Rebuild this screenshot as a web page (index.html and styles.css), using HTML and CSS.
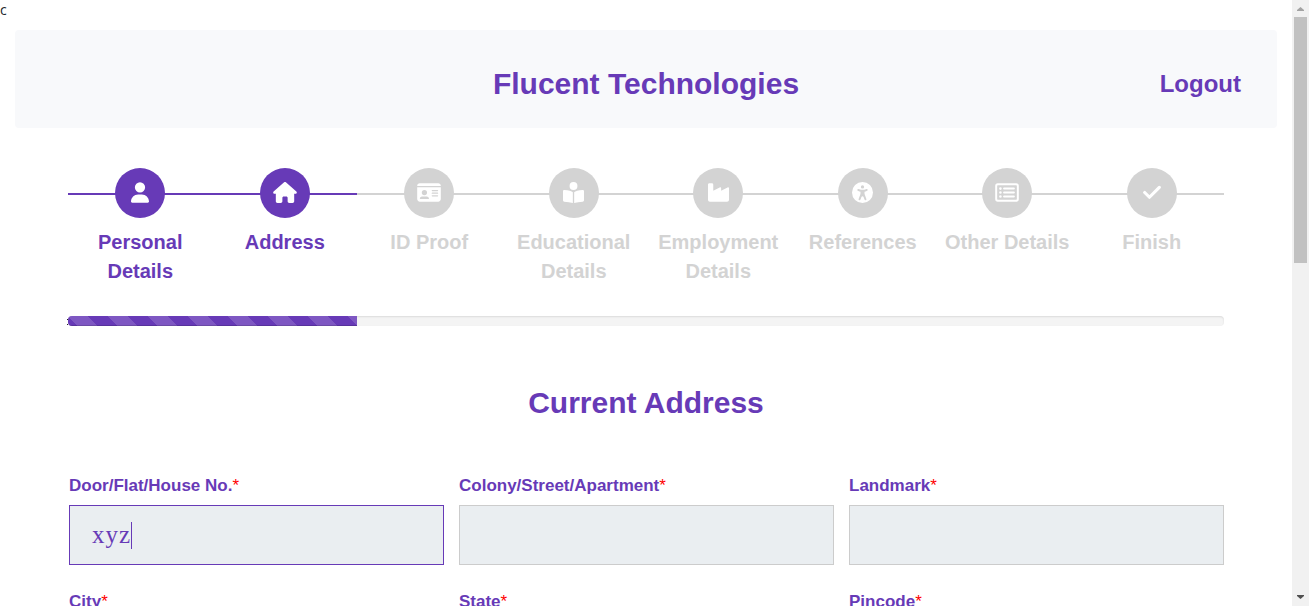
FILE: index.html
```html
<!DOCTYPE html>
<html lang="en">
<head>
<meta charset="utf-8">
<title>Flucent Technologies</title>
<link rel="stylesheet" href="styles.css">
</head>
<body>
<div class="viewport">
<main class="page">
<div class="stray">c</div>
<header class="header"><span></span><h1>Flucent Technologies</h1><a class="logout">Logout</a></header>
<div class="content">
<ol class="steps">
<li class="step active"><div class="circle"><svg width="18" height="21" viewBox="0 0 448 512"><path d="M224 256A128 128 0 1 0 224 0a128 128 0 1 0 0 256zm-46 48C80 304 0 384 0 482c0 16 14 30 30 30h388c16 0 30-14 30-30 0-98-80-178-178-178z"/></svg></div>Personal Details</li>
<li class="step active"><div class="circle"><svg width="24" height="21" viewBox="0 0 576 512"><path d="M575.800 255.500c0 18-15 32.100-32 32.100h-32l.7 160.200c0 2.700-.2 5.400-.5 8.100V472c0 22.100-17.900 40-40 40H392c-22.100 0-40-17.900-40-40V384c0-17.700-14.300-32-32-32H256c-17.700 0-32 14.300-32 32v88c0 22.100-17.900 40-40 40H104c-22.100 0-40-17.900-40-40V287.600H32c-18 0-32-14-32-32.100 0-9 3-17 10-24L266.400 8c7-7 15-8 22-8s15 2 21 7L564.800 231.500c8 7 12 15 11 24z"/></svg></div>Address</li>
<li class="step"><div class="circle"><svg width="24" height="21" viewBox="0 0 576 512"><path fill-rule="evenodd" d="M0 96l576 0c0-35.300-28.700-64-64-64H64C28.700 32 0 60.700 0 96zm0 32v288c0 35.300 28.700 64 64 64h448c35.300 0 64-28.700 64-64V128zM64 405c0-29 24-53 53-53h118c29 0 53 24 53 53 0 6-5 11-11 11H75c-6 0-11-5-11-11zM176 192a64 64 0 1 1 0 128 64 64 0 1 1 0-128zm176 16c0-9 7-16 16-16h128a16 16 0 0 1 0 32H368c-9 0-16-7-16-16zm0 64c0-9 7-16 16-16h128a16 16 0 0 1 0 32H368c-9 0-16-7-16-16zm0 64c0-9 7-16 16-16h128a16 16 0 0 1 0 32H368c-9 0-16-7-16-16z"/></svg></div>ID Proof</li>
<li class="step"><div class="circle"><svg width="21" height="21" viewBox="0 0 512 512"><path d="M352 96a96 96 0 1 0-192 0 96 96 0 1 0 192 0zM240 248c-29-23-104-54-208-56-18 0-32 13-32 31v224c0 18 15 31 31 32 77 4 146 17 209 33zm32 264c62-17 132-29 209-33 16-1 31-14 31-32V223c0-18-14-31-32-31-105 2-179 33-208 56z"/></svg></div>Educational Details</li>
<li class="step"><div class="circle"><svg width="21" height="21" viewBox="0 0 512 512"><path d="M32 32C14.300 32 0 46.300 0 64v368c0 26.500 21.500 48 48 48h416c26.500 0 48-21.500 48-48V152.200c0-18-19-30-35-21L320 215.400v-63.200c0-18-19-30-35-21L128 215.400V64c0-17.700-14.300-32-32-32z"/></svg></div>Employment Details</li>
<li class="step"><div class="circle"><svg width="21" height="21" viewBox="0 0 512 512"><path fill-rule="evenodd" d="M0 256a256 256 0 1 1 512 0 256 256 0 1 1-512 0zm161-86c-12-5-26 0-31 12s0 26 12 32l12 5c17 7 35 13 53 17v47c0 5-1 10-3 15l-42 114c-5 12 2 26 14 31s26-2 31-14l23-63c4-11 14-18 26-18s22 7 26 18l23 63c5 12 18 19 31 14s19-18 14-31l-42-114c-2-5-3-10-3-15v-47c18-4 36-10 53-17l12-5c12-6 17-20 12-32s-20-17-32-12l-11 5c-51 22-110 22-161 0zm95-10a40 40 0 1 0 0-80 40 40 0 1 0 0 80z"/></svg></div>References</li>
<li class="step"><div class="circle"><svg width="24" height="21" viewBox="0 0 576 512"><path fill-rule="evenodd" d="M64 32h448a64 64 0 0 1 64 64v320a64 64 0 0 1-64 64H64a64 64 0 0 1-64-64V96a64 64 0 0 1 64-64zm0 48a16 16 0 0 0-16 16v320a16 16 0 0 0 16 16h448a16 16 0 0 0 16-16V96a16 16 0 0 0-16-16z"/><path d="M96 160a32 32 0 1 1 64 0 32 32 0 1 1-64 0zm0 96a32 32 0 1 1 64 0 32 32 0 1 1-64 0zm0 96a32 32 0 1 1 64 0 32 32 0 1 1-64 0zM216 136h240a24 24 0 0 1 0 48H216a24 24 0 0 1 0-48zm0 96h240a24 24 0 0 1 0 48H216a24 24 0 0 1 0-48zm0 96h240a24 24 0 0 1 0 48H216a24 24 0 0 1 0-48z"/></svg></div>Other Details</li>
<li class="step"><div class="circle"><svg width="18" height="21" viewBox="0 0 448 512"><path d="M42 256l118 118L406 128" fill="none" stroke="#fff" stroke-width="78" stroke-linecap="round" stroke-linejoin="round"/></svg></div>Finish</li>
</ol>
<div class="track"><div class="progress"><div class="bar"></div></div></div>
<h2>Current Address</h2>
<form class="fields">
<div class="field"><label>Door/Flat/House No.<b>*</b></label><div class="input focused">xyz<span class="caret"></span></div></div>
<div class="field"><label>Colony/Street/Apartment<b>*</b></label><div class="input"></div></div>
<div class="field"><label>Landmark<b>*</b></label><div class="input"></div></div>
<div class="field"><label>City<b>*</b></label><div class="input"></div></div>
<div class="field"><label>State<b>*</b></label><div class="input"></div></div>
<div class="field"><label>Pincode<b>*</b></label><div class="input"></div></div>
</form>
</div>
</main>
<aside class="scrollbar"><svg width="17" height="17"><path fill="#a3a3a3" d="M5 11h7v-1L8.500 7 5 10z"/></svg><div class="thumb"></div><svg width="17" height="17"><path fill="#505050" d="M5 6h7v1L8.500 10 5 7z"/></svg></aside>
</div>
</body>
</html>
```
FILE: styles.css
```css
* { box-sizing: border-box; }
body { margin: 0; overflow: hidden; background: #fff; color: #673ab7; font-family: "Liberation Sans", Arial, sans-serif; }
.viewport { display: flex; height: 606px; overflow: hidden; }
.page { flex: 1; height: 606px; overflow: hidden; }
.stray { height: 30px; color: #212529; font: 14px/20px "Open Sans", sans-serif; }
.header { display: grid; grid-template-columns: 1fr auto 1fr; align-items: center; height: 98px; margin: 0 15px; padding: 10px 36px 0; border-radius: 4px; background: #f8f9fb; }
h1, h2 { margin: 0; font-size: 30px; line-height: 36px; font-weight: bold; }
h2 { margin-top: 59px; text-align: center; }
.logout { justify-self: end; font-size: 24px; font-weight: bold; }
.content { margin: 40px 68px 0; }
.steps { display: grid; grid-template-columns: repeat(8, 1fr); height: 148px; margin: 0; padding: 0; list-style: none; background: linear-gradient(#d3d3d3, #d3d3d3) 0 25px / 100% 2px no-repeat; }
.step { color: #d3d3d3; font-size: 20px; font-weight: bold; line-height: 29px; text-align: center; }
.active { color: #673ab7; background: linear-gradient(#673ab7, #673ab7) 0 25px / 100% 2px no-repeat; }
.circle { display: flex; align-items: center; justify-content: center; width: 50px; height: 50px; margin: 0 auto 10px; border-radius: 50%; background: currentColor; }
.circle svg { margin-bottom: 1px; fill: #fff; }
.track { position: relative; }
.track::before { content: ""; position: absolute; left: -1px; top: 3px; width: 1px; height: 4px; border: solid #222; border-width: 1px 0; }
.progress { height: 10px; overflow: hidden; border-radius: 4px; background: #f4f4f4; box-shadow: inset 0 1px 2px rgba(0, 0, 0, .1); }
.bar { width: 25%; height: 10px; background: linear-gradient(45deg, rgba(255, 255, 255, .15) 25%, transparent 25%, transparent 50%, rgba(255, 255, 255, .15) 50%, rgba(255, 255, 255, .15) 75%, transparent 75%) 0 0 / 40px 40px #673ab7; box-shadow: inset 0 -1px 0 rgba(0, 0, 0, .15); }
.fields { display: grid; grid-template-columns: repeat(3, 375px); gap: 26px 15px; margin: 54px 0 0 1px; }
label { display: block; height: 30px; padding-top: 1px; font-size: 17px; font-weight: bold; line-height: 20px; }
label b { color: red; font-weight: normal; }
.input { display: flex; align-items: center; height: 60px; padding-left: 22px; border: 1px solid #ccc; background: #eaeef1; font: 25px "Liberation Serif", serif; letter-spacing: 1px; }
.focused { border-color: #673ab7; }
.caret { width: 1px; height: 27px; background: #673ab7; }
.scrollbar { display: flex; flex-direction: column; justify-content: space-between; width: 17px; background: #f1f1f1; }
.thumb { width: 13px; height: 246px; margin: 0 2px auto; background: #c1c1c1; }
```
